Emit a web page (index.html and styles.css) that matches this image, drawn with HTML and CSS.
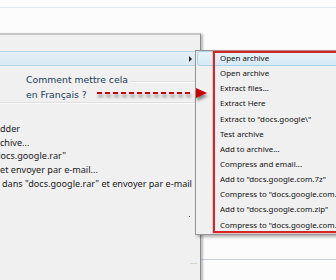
FILE: index.html
```html
<!DOCTYPE html>
<html>
<head>
<meta charset="utf-8">
<link rel="stylesheet" href="styles.css">
</head>
<body>
<div class="desk">
  <div class="rule r1"></div>
  <div class="rule r2"></div>
</div>

<div class="menu parent">
  <div class="pad-top"></div>
  <div class="pitem hot"><span class="subarrow"></span></div>
  <div class="gap">
    <div class="sep s1"></div>
    <div class="sep s2"></div>
  </div>
  <div class="pitem txt">dder</div>
  <div class="pitem txt">chive...</div>
  <div class="pitem txt shift-l">docs.google.rar"</div>
  <div class="pitem txt">et envoyer par e-mail...</div>
  <div class="pitem txt shift-r">dans "docs.google.rar" et envoyer par e-mail</div>
  <span class="dot"></span>
  <span class="tick"></span>
</div>

<div class="menu sub">
  <div class="sitem hot">Open archive</div>
  <div class="sitem">Open archive</div>
  <div class="sitem">Extract files...</div>
  <div class="sitem">Extract Here</div>
  <div class="sitem">Extract to "docs.google\"</div>
  <div class="sitem">Test archive</div>
  <div class="sitem">Add to archive...</div>
  <div class="sitem">Compress and email...</div>
  <div class="sitem">Add to "docs.google.com.7z"</div>
  <div class="sitem">Compress to "docs.google.com.7z" and email</div>
  <div class="sitem">Add to "docs.google.com.zip"</div>
  <div class="sitem">Compress to "docs.google.com.zip" and email</div>
</div>

<div class="redbox"></div>

<div class="note">Comment mettre cela<br>en Français ?</div>

<svg class="pointer" width="116" height="16" viewBox="0 0 116 16">
  <line x1="2" y1="7" x2="96" y2="7" stroke="#c80000" stroke-width="2" stroke-dasharray="5 3"/>
  <polygon points="101,2 112,7 101,12" fill="#c80000"/>
</svg>
</body>
</html>
```

FILE: styles.css
```css
html, body {
  margin: 0;
  padding: 0;
}
body {
  width: 336px;
  height: 280px;
  overflow: hidden;
  position: relative;
  background: #fcfcfc;
  font-family: "Noto Sans", "Open Sans", sans-serif;
  font-size: 8.5px;
  color: #1a1a1a;
}

.desk {
  display: flex;
  flex-direction: column;
}
.rule {
  height: 1px;
  background: #e2e8ee;
}
.r1 { margin-top: 7px; }
.r2 { margin-top: 251px; background: #c8d2dc; }

.menu {
  position: absolute;
  box-sizing: border-box;
  background: #f0f0f0;
}

.parent {
  left: -20px;
  top: 33px;
  width: 221px;
  height: 260px;
  border-top: 2px solid #c6c6c6;
  border-right: 1px solid #8c8c8c;
  box-shadow: 2px 1px 2px rgba(0, 0, 0, 0.25);
}
.pad-top { height: 16px; }
.pitem {
  display: flex;
  align-items: center;
  white-space: nowrap;
}
.pitem.hot {
  box-sizing: border-box;
  height: 15px;
  margin-right: 4px;
  justify-content: flex-end;
  padding-right: 4px;
  background: linear-gradient(#e4f0f7, #d8e9f3);
  border-top: 1px solid #b3d7e8;
  border-bottom: 1px solid #b3d7e8;
}
.subarrow {
  width: 0;
  height: 0;
  border-top: 3px solid transparent;
  border-bottom: 3px solid transparent;
  border-left: 3px solid #202020;
}
.gap {
  height: 56px;
  display: flex;
  flex-direction: column;
}
.sep {
  height: 1px;
  background: #e0e0e0;
  border-bottom: 1px solid #fbfbfb;
}
.s1 { margin-top: 15px; margin-left: 150px; }
.s2 { margin-top: 19px; }
.pitem.txt {
  height: 13.6px;
  padding-left: 20px;
  font-size: 9.1px;
}
.pitem.shift-l { padding-left: 15px; }
.pitem.shift-r { padding-left: 22px; }

.dot {
  position: absolute;
  left: 209px;
  top: 181px;
  width: 1px;
  height: 1px;
  background: #555;
}
.tick {
  position: absolute;
  left: 210px;
  top: 228px;
  width: 7px;
  height: 1px;
  background: #d4d4d4;
}

.sub {
  left: 195px;
  top: 50px;
  width: 160px;
  height: 185px;
  border: 1px solid #979797;
  box-shadow: 2px 2px 3px rgba(0, 0, 0, 0.3);
  display: flex;
  flex-direction: column;
  font-size: 7.9px;
}
.sitem {
  box-sizing: border-box;
  height: 15.15px;
  line-height: 15px;
  padding-left: 24px;
  white-space: nowrap;
  color: #111;
}
.sitem.hot {
  margin-left: 1px;
  padding-left: 22px;
  border: 1px solid #a9d4e8;
  border-radius: 3px;
  background: linear-gradient(#e8f3f9, #d6e9f4);
  line-height: 13px;
}

.redbox {
  position: absolute;
  left: 213px;
  top: 51px;
  width: 130px;
  height: 182px;
  box-sizing: border-box;
  border: 2px solid #d2262b;
  box-shadow: 0 0 0 1px rgba(230, 120, 120, 0.35);
}

.note {
  position: absolute;
  left: 26px;
  top: 72px;
  font-family: "DejaVu Sans", sans-serif;
  font-size: 9.3px;
  line-height: 15px;
  color: #213a5c;
  white-space: nowrap;
}

.pointer {
  position: absolute;
  left: 95px;
  top: 86px;
  filter: drop-shadow(1px 3px 1.5px rgba(0, 0, 0, 0.45));
}
```
